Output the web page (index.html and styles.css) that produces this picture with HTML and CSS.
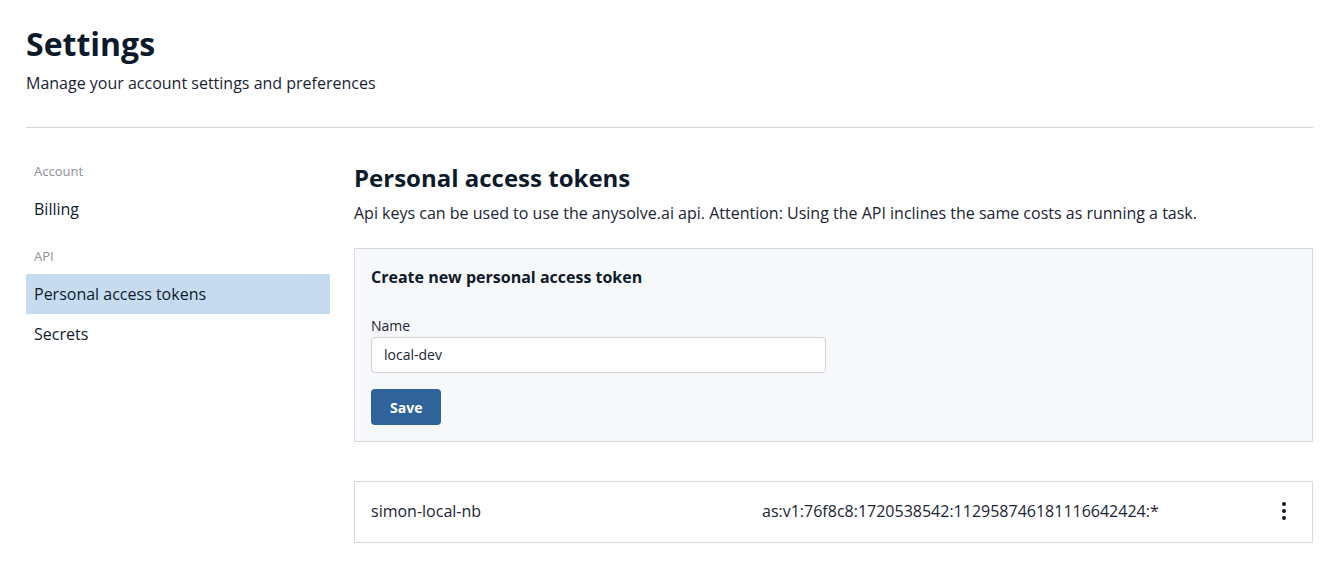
FILE: index.html
```html
<!DOCTYPE html>
<html lang="en">
<head>
<meta charset="utf-8">
<title>Settings</title>
<link rel="stylesheet" href="styles.css">
</head>
<body>
<div class="page">
  <header class="page-header">
    <h1 class="page-title">Settings</h1>
    <p class="page-subtitle">Manage your account settings and preferences</p>
  </header>
  <hr class="divider">
  <div class="layout">
    <nav class="sidebar">
      <div class="nav-group-label">Account</div>
      <a class="nav-item">Billing</a>
      <div class="nav-group-label nav-group-label--spaced">API</div>
      <a class="nav-item nav-item--active">Personal access tokens</a>
      <a class="nav-item">Secrets</a>
    </nav>
    <main class="content">
      <h2 class="section-title">Personal access tokens</h2>
      <p class="section-desc">Api keys can be used to use the anysolve.ai api. Attention: Using the API inclines the same costs as running a task.</p>
      <section class="create-card">
        <h3 class="card-title">Create new personal access token</h3>
        <label class="field-label">Name</label>
        <div class="input">local-dev</div>
        <button class="btn-primary">Save</button>
      </section>
      <div class="token-row">
        <span class="token-name">simon-local-nb</span>
        <span class="token-value">as:v1:76f8c8:1720538542:112958746181116642424:*</span>
        <span class="kebab" aria-label="More">
          <svg width="24" height="24" viewBox="0 0 24 24"><circle cx="12" cy="5" r="2" fill="#0f1b2b"/><circle cx="12" cy="12" r="2" fill="#0f1b2b"/><circle cx="12" cy="19" r="2" fill="#0f1b2b"/></svg>
        </span>
      </div>
    </main>
  </div>
</div>
</body>
</html>
```

FILE: styles.css
```css
* { box-sizing: border-box; }
html, body { margin: 0; padding: 0; background: #ffffff; }
body {
  font-family: "Open Sans", "Noto Sans", sans-serif;
  color: #0f1b2b;
}
.page {
  padding: 24px 15px 0 26px;
}
.page-title {
  margin: 0;
  font-size: 32px;
  line-height: 40px;
  font-weight: 700;
  color: #0d1a2b;
}
.page-subtitle {
  margin: 7px 0 0;
  font-size: 16px;
  line-height: 24px;
  color: #1a2433;
}
.divider {
  margin: 32px 0 0;
  border: 0;
  border-top: 1px solid #d3d5da;
}
.layout {
  display: flex;
  gap: 24px;
  padding-top: 33px;
}
.sidebar {
  width: 304px;
  flex: none;
  display: flex;
  flex-direction: column;
}
.nav-group-label {
  font-size: 13px;
  line-height: 20px;
  color: #8b9099;
  padding: 0 8px;
  margin-bottom: 8px;
}
.nav-group-label--spaced { margin-top: 17px; }
.nav-item {
  display: block;
  padding: 8px;
  font-size: 16px;
  line-height: 24px;
  color: #0f1b2b;
}
.nav-item--active { background: #c6dbef; }
.content {
  flex: 1;
  min-width: 0;
}
.section-title {
  margin: 1px 0 0;
  font-size: 24px;
  line-height: 32px;
  font-weight: 700;
  color: #0d1a2b;
}
.section-desc {
  margin: 7px 0 0;
  font-size: 16px;
  line-height: 24px;
  color: #1a2433;
}
.create-card {
  margin-top: 23px;
  background: #f7f8fa;
  border: 1px solid #d6d9de;
  padding: 16px;
  display: flex;
  flex-direction: column;
  align-items: flex-start;
}
.card-title {
  margin: 0;
  font-size: 16px;
  line-height: 24px;
  font-weight: 700;
  color: #0f1b2b;
}
.field-label {
  margin-top: 27px;
  font-size: 14px;
  line-height: 20px;
  color: #1a2433;
}
.input {
  margin-top: 1px;
  width: 455px;
  height: 36px;
  background: #ffffff;
  border: 1px solid #cfd3da;
  border-radius: 4px;
  padding: 0 12px;
  font-size: 14px;
  line-height: 34px;
  color: #1a2433;
}
.btn-primary {
  margin-top: 16px;
  height: 36px;
  padding: 0 19px;
  border: 0;
  border-radius: 4px;
  background: #2f6399;
  color: #ffffff;
  font-family: inherit;
  font-size: 14px;
  font-weight: 700;
}
.token-row {
  margin-top: 39px;
  height: 62px;
  border: 1px solid #d6d9de;
  background: #ffffff;
  display: grid;
  grid-template-columns: 391px 1fr auto;
  align-items: center;
  padding: 0 16px 3px;
  font-size: 16px;
  color: #1a2433;
}
.token-value { font-size: 16px; }
.kebab { display: flex; }
```
